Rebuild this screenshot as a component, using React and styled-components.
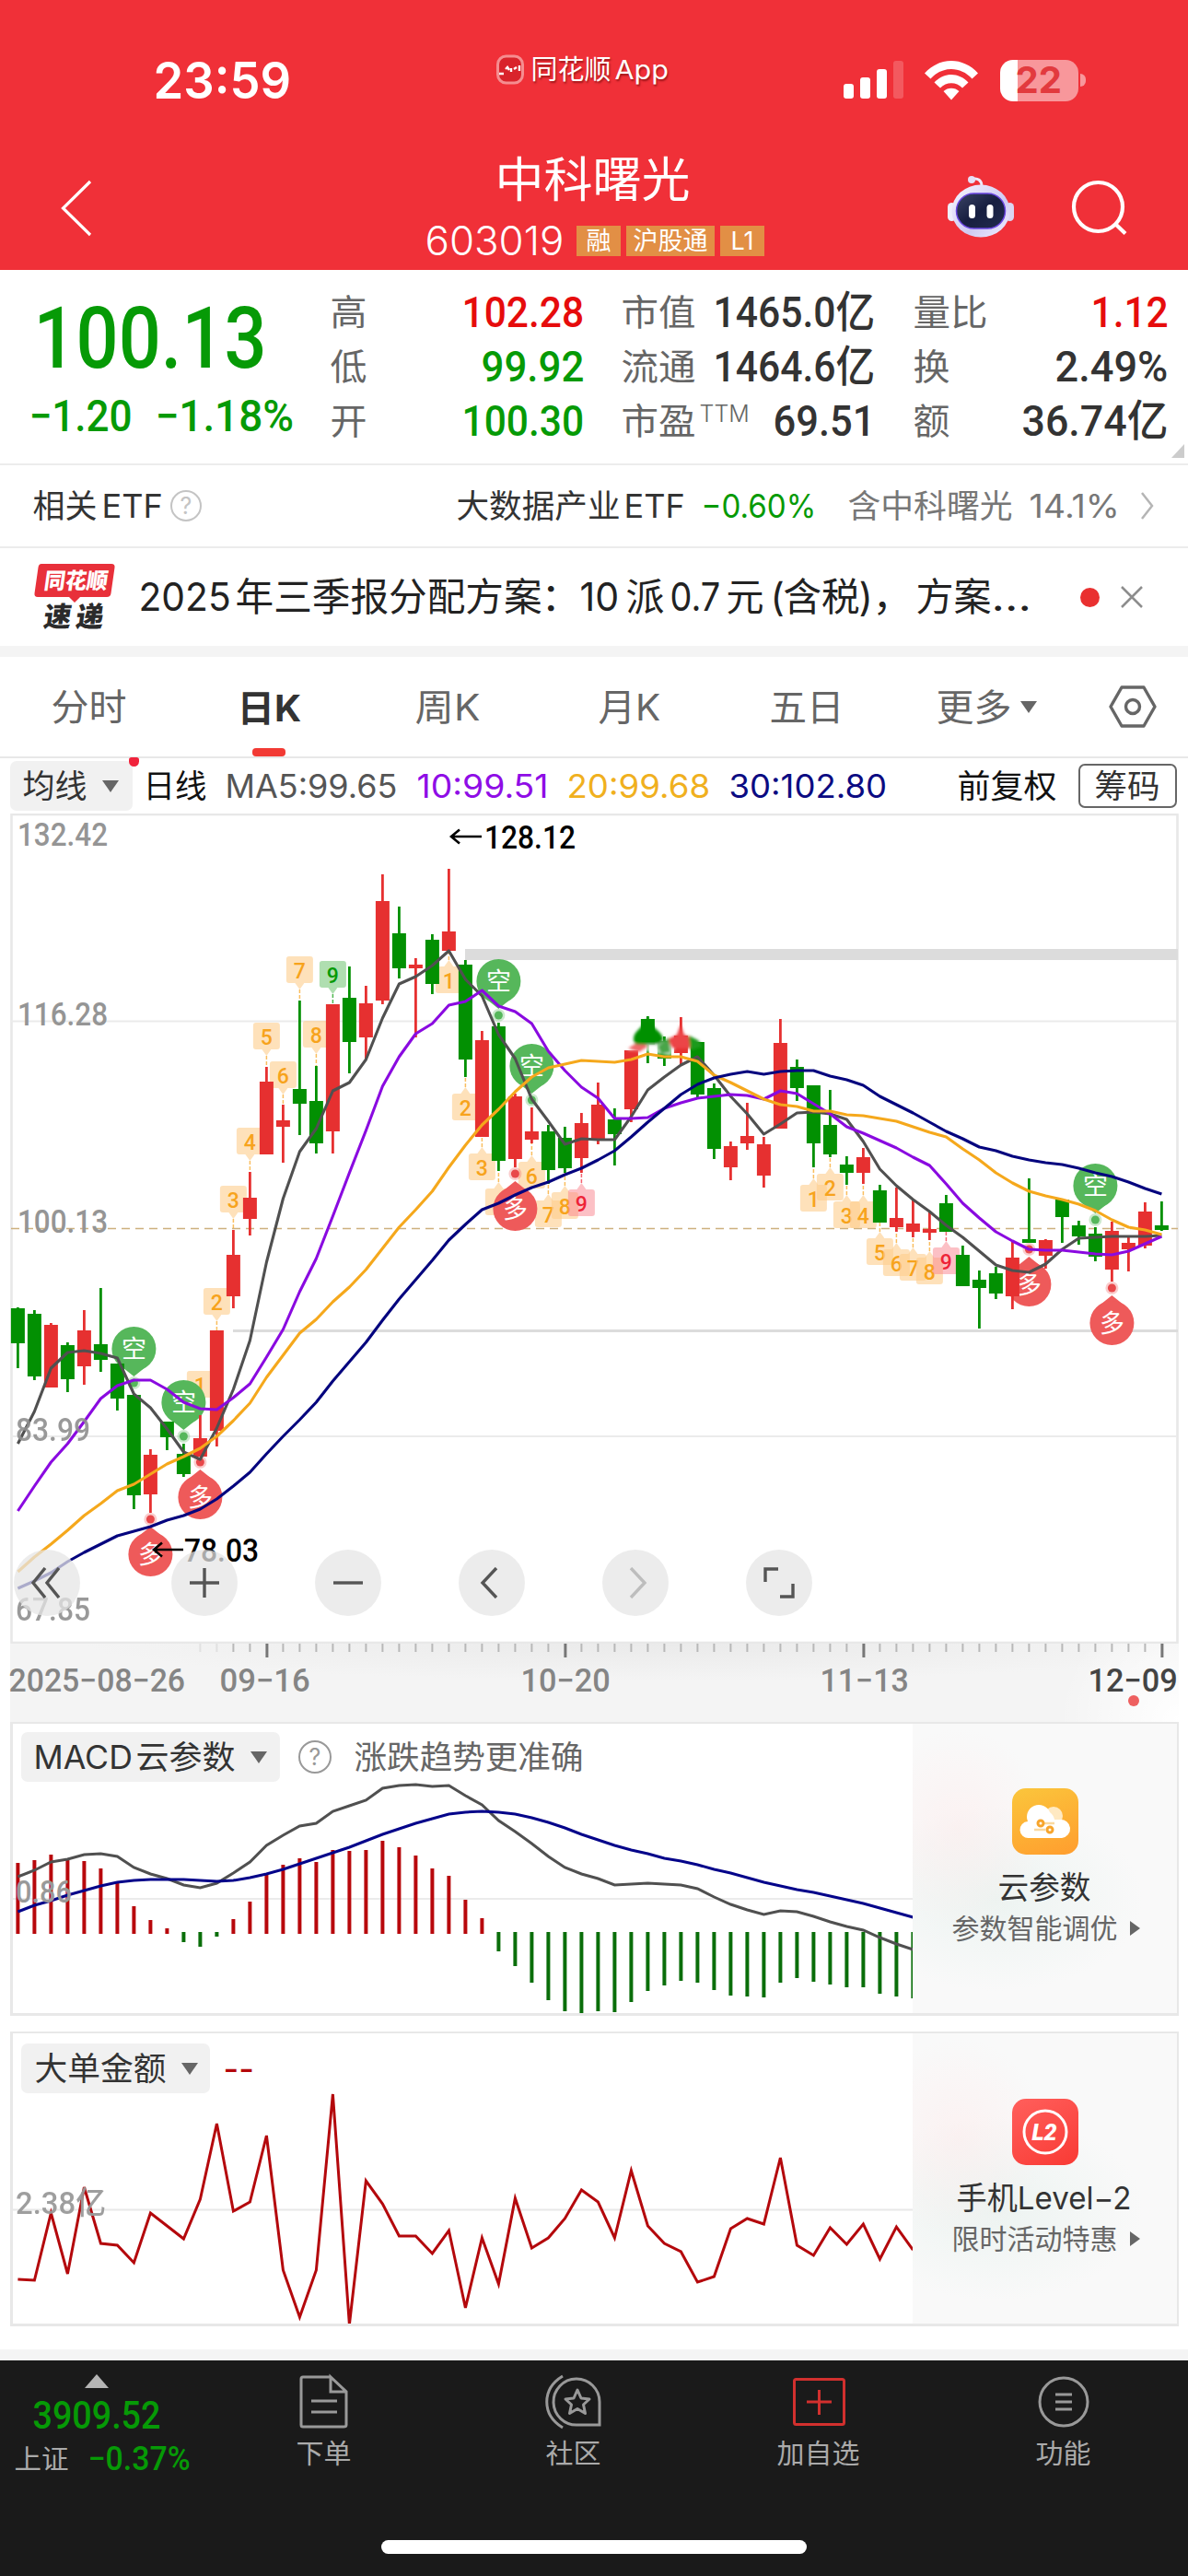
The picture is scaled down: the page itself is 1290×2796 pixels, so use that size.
import React, { useLayoutEffect, useRef } from "react";
import styled, { createGlobalStyle } from "styled-components";

const CJK = '"Noto Sans CJK SC", sans-serif';
const TEXT = `Inter, ${CJK}`;
const DIN = `Roboto, ${CJK}`;
const GREEN = "#069a06";
const RED = "#e60c0c";

const Global = createGlobalStyle`
  * { box-sizing: border-box; }
  html, body { margin: 0; padding: 0; background: #fff; }
  body { font-family: ${TEXT}; color: #333; }
  svg { display: block; flex: none; }
`;

const Screen = styled.main`
  width: 1290px;
  height: 2796px;
  display: flex;
  flex-direction: column;
  background: #fff;
  overflow: hidden;
`;

/* Label squeezed or stretched horizontally to a fixed width */
const FitBox = styled.span`
  display: block;
  flex: none;
  width: ${(p) => p.$w}px;
  margin-left: ${(p) => p.$ml || 0}px;
  height: ${(p) => p.$size}px;
  line-height: ${(p) => p.$size}px;
  font-size: ${(p) => p.$size}px;
  font-family: ${(p) => (p.$din ? DIN : TEXT)};
  font-weight: ${(p) => p.$weight || 400};
  font-style: ${(p) => (p.$italic ? "italic" : "normal")};
  color: ${(p) => p.$color || "inherit"};
  margin-top: ${(p) => p.$dy || 0}px;
  text-shadow: ${(p) => (p.$shadow ? "1px 2px 2px rgba(90,0,0,.55)" : "none")};
`;
const FitInner = styled.span`
  display: inline-block;
  white-space: nowrap;
  transform-origin: 0 50%;
`;
function Fit({ w, size, ml, din, weight, color, dy, italic, shadow, children }) {
  const ref = useRef(null);
  useLayoutEffect(() => {
    const el = ref.current;
    if (el && el.offsetWidth) el.style.transform = `translateX(-1.5px) scaleX(${(w + 1) / el.offsetWidth})`;
  });
  return (
    <FitBox $w={w} $size={size} $ml={ml} $din={din} $weight={weight} $color={color} $dy={dy} $italic={italic} $shadow={shadow}>
      <FitInner ref={ref}>{children}</FitInner>
    </FitBox>
  );
}

/* ---------- header ---------- */
const Header = styled.header`
  height: 293px;
  flex: none;
  background: #f03038;
  color: #fff;
  display: flex;
  flex-direction: column;
`;
const StatusBar = styled.div`
  height: 158px;
  padding-top: 16px;
  display: flex;
  align-items: center;
`;
const AppSource = styled.div`
  display: flex;
  align-items: center;
  margin: -24px 0 0 222px;
`;
const StatusIcons = styled.div`
  display: flex;
  align-items: center;
  margin-left: 189px;
  gap: 22px;
`;
const Battery = styled.div`
  width: 85px;
  height: 45px;
  margin-left: 2px;
  border-radius: 14px;
  display: flex;
  align-items: center;
  padding-left: 18px;
  background: linear-gradient(90deg, #fff 19px, #f8979b 19px);
`;
const Nub = styled.i`
  width: 6px;
  height: 14px;
  margin-left: -20px;
  border-radius: 0 7px 7px 0;
  background: #f8979b;
`;
const TitleBar = styled.div`
  height: 135px;
  display: flex;
`;
const TitleBlock = styled.div`
  width: 367px;
  margin-left: 365px;
  display: flex;
  flex-direction: column;
`;
const CodeRow = styled.div`
  display: flex;
  align-items: center;
  height: 34px;
  margin-top: 22px;
`;
const Tag = styled.span`
  width: ${(p) => p.$w}px;
  height: 33px;
  margin-left: ${(p) => p.$ml}px;
  background: #e28f45;
  display: flex;
  align-items: center;
  justify-content: center;
  font-size: 27px;
  line-height: 33px;
`;

/* ---------- quote ---------- */
const Quote = styled.section`
  height: 212px;
  flex: none;
  border-bottom: 2px solid #ececec;
  display: flex;
  padding-left: 34px;
`;
const PriceBlock = styled.div`
  width: 326px;
  display: flex;
  flex-direction: column;
  padding-top: 28px;
`;
const ChangeRow = styled.div`
  display: flex;
  margin-top: 14px;
  margin-left: -1px;
`;
const QuoteCol = styled.dl`
  width: ${(p) => p.$w}px;
  margin: 16px 0 0 ${(p) => p.$ml || 0}px;
`;
const QuoteRow = styled.div`
  height: 59px;
  display: flex;
  align-items: center;
  justify-content: space-between;
`;
const RowLabel = styled.div`
  display: flex;
  color: #666;
`;
const Corner = styled.i`
  align-self: flex-end;
  width: 0;
  height: 0;
  margin: 0 0 6px 3px;
  border-left: 14px solid transparent;
  border-bottom: 15px solid #ccc;
`;

const EtfRow = styled.section`
  height: 90px;
  flex: none;
  border-bottom: 2px solid #ececec;
  display: flex;
  align-items: center;
  padding: 0 37px;
`;
const Help = styled.span`
  width: ${(p) => p.$d}px;
  height: ${(p) => p.$d}px;
  margin-left: ${(p) => p.$ml}px;
  border: 2px solid ${(p) => p.$c};
  color: ${(p) => p.$c};
  border-radius: 50%;
  font-size: 25px;
  line-height: ${(p) => p.$d - 4}px;
  text-align: center;
`;
const NewsRow = styled.section`
  height: 118px;
  flex: none;
  border-bottom: 12px solid #f4f4f4;
  display: flex;
  align-items: center;
  padding-left: 37px;
`;
const RedDot = styled.i`
  width: ${(p) => p.$d}px;
  height: ${(p) => p.$d}px;
  margin-left: ${(p) => p.$ml || 0}px;
  border-radius: 50%;
  background: #e93030;
`;

/* ---------- tabs ---------- */
const Tabs = styled.nav`
  height: 110px;
  flex: none;
  border-bottom: 2px solid #e8e8e8;
  display: flex;
  align-items: center;
  color: #666;
`;
const ActiveTab = styled.div`
  height: 108px;
  margin-left: 121px;
  display: flex;
  flex-direction: column;
  align-items: center;
  justify-content: flex-end;
`;
const ActiveBar = styled.i`
  width: 36px;
  height: 9px;
  border-radius: 4px;
  background: #f23a34;
  margin: 23px 0 0 -3px;
`;
const Caret = styled.i`
  width: 0;
  height: 0;
  margin-left: ${(p) => p.$ml}px;
  border: 9px solid transparent;
  border-top: 13px solid #666;
  border-bottom: 0;
`;
const RightCaret = styled.i`
  width: 0;
  height: 0;
  margin-left: 13px;
  border: 8px solid transparent;
  border-left: 11px solid #666;
  border-right: 0;
`;

const MaRow = styled.section`
  height: 60px;
  flex: none;
  display: flex;
  align-items: center;
  padding-left: 11px;
`;
const Picker = styled.button`
  position: relative;
  border: 0;
  padding: 0 0 0 15px;
  width: ${(p) => p.$w}px;
  height: 54px;
  border-radius: 7px;
  background: #f1f1f1;
  color: #333;
  display: flex;
  align-items: center;
  flex: none;
`;
const PickerBadge = styled.i`
  position: absolute;
  right: -7px;
  top: -4px;
  width: 11px;
  height: 10px;
  border-radius: 3px 3px 6px 6px;
  background: #f0233c;
`;
const ChipButton = styled.button`
  width: 107px;
  height: 48px;
  margin-left: 23px;
  padding: 0;
  border: 2px solid #666;
  border-radius: 7px;
  background: #fff;
  color: #333;
  display: flex;
  align-items: center;
  justify-content: center;
`;

/* ---------- chart ---------- */
const ChartWrap = styled.section`
  position: relative;
  width: 1269px;
  height: 901px;
  margin-left: 11px;
  flex: none;
`;
const Controls = styled.div`
  position: absolute;
  left: 4px;
  top: 799px;
  display: flex;
  gap: 84px;
`;
const RoundButton = styled.button`
  width: 72px;
  height: 72px;
  padding: 0;
  margin-left: ${(p) => p.$ml || 0}px;
  border: 0;
  border-radius: 50%;
  background: rgba(230, 230, 230, 0.74);
  display: flex;
  align-items: center;
  justify-content: center;
`;
const Axis = styled.section`
  width: 1269px;
  height: 85px;
  margin-left: 11px;
  flex: none;
  background: radial-gradient(circle at 1269px 84px, #fff 0, rgba(255, 255, 255, 0) 130px),
    radial-gradient(ellipse 620px 40px at 700px 0, #eaeaea, rgba(234, 234, 234, 0)), #f4f4f4;
  display: flex;
  flex-direction: column;
`;
const DateRow = styled.div`
  display: flex;
  align-items: center;
  height: 35px;
  margin-top: 7px;
  color: #858585;
`;
const AxisDot = styled.i`
  width: 12px;
  height: 12px;
  border-radius: 50%;
  background: #ee6060;
  margin: -2px 0 0 1214px;
`;

const Panel = styled.section`
  width: 1269px;
  height: ${(p) => p.$h}px;
  margin: ${(p) => p.$mt || 0}px 0 0 11px;
  flex: none;
  border: 3px solid #e8e8e8;
  border-top-width: 2px;
  border-right-width: 2px;
  display: flex;
`;
const PanelMain = styled.div`
  position: relative;
  width: 977px;
`;
const PanelHead = styled.div`
  position: absolute;
  left: 9px;
  top: ${(p) => p.$top}px;
  display: flex;
  align-items: center;
`;
const Promo = styled.aside`
  flex: 1;
  display: flex;
  flex-direction: column;
  align-items: center;
  background: radial-gradient(ellipse 95px 110px at 50px 115px, rgba(255, 230, 230, 0.4), rgba(255, 228, 228, 0)),
    radial-gradient(ellipse 160px 100px at 90px 190px, rgba(228, 240, 236, 0.6), rgba(226, 240, 235, 0)), #f9f9f9;
  padding-top: ${(p) => p.$pt}px;
`;
const PromoIcon = styled.div`
  width: 72px;
  height: 72px;
  border-radius: 15px;
  background: ${(p) => p.$bg};
  margin-bottom: 19px;
`;
const PromoSub = styled.div`
  display: flex;
  align-items: center;
  margin-top: 12px;
  padding-left: 4px;
`;

/* ---------- bottom ---------- */
const NavBar = styled.footer`
  margin-top: auto;
  height: 246px;
  flex: none;
  border-top: 12px solid #f4f4f4;
  background: #1a1a1a;
  color: #aaa;
  display: flex;
  flex-direction: column;
  justify-content: space-between;
  align-items: center;
`;
const NavItems = styled.div`
  width: 1290px;
  display: flex;
`;
const IndexBlock = styled.div`
  width: 206px;
  padding-left: 17px;
  display: flex;
  flex-direction: column;
`;
const UpMark = styled.i`
  width: 0;
  height: 0;
  margin: 15px 0 0 75px;
  border: 13px solid transparent;
  border-bottom: 15px solid #b5b5b5;
  border-top: 0;
`;
const IndexRow = styled.div`
  display: flex;
  align-items: center;
  margin-top: 8px;
`;
const NavItem = styled.div`
  width: 100px;
  margin-left: ${(p) => p.$ml}px;
  padding-top: 13px;
  display: flex;
  flex-direction: column;
  align-items: center;
  gap: 10px;
`;
const HomeBar = styled.i`
  width: 462px;
  height: 15px;
  border-radius: 8px;
  background: #fff;
  margin: 0 0 24px 0;
`;

/* ---------- chart data ---------- */
const STEP = 18;
const X = (i) => 19.4 + STEP * i;

// [colour, high, body top, body bottom, low]
const CANDLES = [
  ["g",1419,1420,1458,1485],["g",1422,1426,1494,1498],["r",1436,1438,1506,1506],["g",1457,1460,1497,1511],
  ["r",1422,1444,1483,1503],["g",1398,1459,1476,1489],["g",1480,1480,1518,1531],["g",1514,1514,1623,1638],
  ["r",1573,1579,1622,1642],["g",1543,1543,1560,1574],["g",1567,1578,1600,1603],["r",1536,1561,1581,1581],
  ["r",1444,1444,1553,1570],["r",1335,1362,1407,1420],["r",1272,1300,1323,1341],["r",1158,1174,1253,1253],
  ["r",1199,1216,1223,1262],["g",1086,1182,1198,1232],["g",1157,1195,1241,1252],["r",1090,1090,1228,1252],
  ["g",1049,1083,1131,1165],["r",1070,1089,1126,1150],["r",949,978,1086,1090],["g",984,1013,1051,1062],
  ["r",1040,1047,1051,1126],["g",1014,1020,1068,1079],["r",943,1011,1032,1032],["g",1042,1047,1150,1169],
  ["r",1119,1129,1234,1234],["g",1110,1114,1260,1271],["r",1187,1190,1258,1267],["r",1202,1228,1237,1241],
  ["g",1221,1228,1270,1285],["g",1223,1235,1268,1273],["r",1208,1219,1257,1273],["r",1175,1199,1238,1242],
  ["g",1203,1215,1231,1265],["r",1140,1140,1204,1218],["g",1103,1106,1134,1154],["g",1125,1130,1149,1157],
  ["r",1104,1124,1143,1156],["g",1131,1131,1188,1192],["g",1176,1181,1247,1258],["r",1239,1244,1267,1281],
  ["r",1197,1233,1241,1248],["r",1234,1242,1276,1289],["r",1106,1132,1225,1225],["g",1150,1158,1181,1195],
  ["g",1178,1178,1241,1267],["g",1183,1221,1253,1256],["g",1255,1264,1273,1286],["r",1246,1256,1273,1285],
  ["g",1286,1292,1327,1327],["r",1289,1322,1332,1337],["r",1301,1328,1337,1343],["r",1315,1334,1338,1346],
  ["g",1297,1306,1337,1337],["g",1352,1362,1396,1396],["g",1379,1389,1398,1442],["g",1375,1382,1404,1410],
  ["r",1348,1365,1407,1421],["g",1279,1345,1349,1349],["r",1345,1346,1363,1377],["g",1301,1302,1321,1349],
  ["g",1325,1330,1342,1351],["g",1332,1339,1364,1369],["r",1326,1336,1378,1391],["r",1343,1349,1356,1380],
  ["r",1305,1315,1352,1355],["g",1304,1330,1335,1336],
];
const MA5 = [1567,1532,1485,1468,1466,1469,1474,1513,1528,1551,1576,1584,1550,1508,1455,1370,1301,1250,1225,1184,1175,1150,1105,1068,1060,1048,1032,1063,1081,1123,1149,1193,1217,1242,1236,1237,1237,1212,1183,1169,1156,1147,1167,1190,1209,1231,1220,1208,1207,1209,1215,1239,1269,1287,1302,1315,1330,1343,1358,1373,1379,1381,1372,1356,1344,1343,1342,1342,1342,1341];
const MA10 = [1640,1613,1587,1567,1543,1518,1504,1498,1498,1508,1522,1529,1530,1517,1502,1473,1443,1402,1366,1320,1273,1227,1179,1147,1122,1111,1091,1087,1075,1092,1098,1111,1141,1162,1180,1192,1214,1214,1213,1203,1197,1192,1190,1188,1189,1193,1184,1187,1198,1209,1223,1230,1238,1246,1256,1265,1285,1306,1322,1337,1347,1356,1357,1357,1359,1361,1362,1358,1350,1342];
const MA20 = [1706,1690,1676,1661,1645,1632,1618,1611,1600,1589,1581,1572,1559,1542,1523,1495,1471,1447,1432,1413,1397,1378,1355,1332,1313,1293,1267,1243,1221,1204,1185,1169,1159,1155,1151,1152,1153,1150,1144,1147,1147,1152,1167,1175,1184,1193,1199,1201,1206,1206,1210,1211,1214,1217,1223,1229,1234,1247,1259,1273,1284,1293,1298,1302,1307,1314,1324,1332,1335,1340];
const MA30 = [1724,1716,1707,1695,1685,1676,1667,1662,1657,1650,1645,1638,1627,1613,1598,1578,1559,1541,1522,1499,1478,1457,1433,1410,1389,1368,1346,1329,1313,1306,1297,1289,1283,1275,1268,1259,1249,1234,1218,1203,1188,1177,1170,1166,1163,1166,1163,1162,1162,1168,1172,1178,1190,1199,1208,1218,1228,1236,1245,1249,1255,1259,1262,1264,1268,1273,1277,1283,1290,1296];

// [candle, number, box top, direction, tone]
const COUNTS = [
  [11,"1",1488,"up"],[12,"2",1398,"up"],[13,"3",1287,"up"],[14,"4",1224,"up"],[15,"5",1110,"up"],[16,"6",1152,"up"],
  [17,"7",1038,"up"],[18,"8",1108,"up"],[19,"9",1043,"up","green"],
  [26,"1",1049,"down"],[27,"2",1187,"down"],[28,"3",1252,"down"],[29,"4",1290,"down"],[31,"6",1261,"down"],
  [32,"7",1303,"down"],[33,"8",1294,"down"],[34,"9",1291,"down","red"],
  [48,"1",1286,"down"],[49,"2",1274,"down"],[50,"3",1304,"down"],[51,"4",1304,"down"],[52,"5",1344,"down"],
  [53,"6",1356,"down"],[54,"7",1361,"down"],[55,"8",1365,"down"],[56,"9",1354,"down","red"],
];
const SHORT_PINS = [[7,1440],[10,1498],[29,1041],[31,1133],[65,1263]];
const LONG_PINS = [[8,1711],[11,1649],[30,1336],[61,1418],[66,1460]];

const BARS = [2022,2019,2013,2019,2020,2028,2044,2069,2084,2093,2108,2113,2102,2083,2064,2035,2024,2017,2021,2008,2009,2008,1998,2005,2014,2028,2036,2062,2082,2118,2134,2152,2171,2183,2185,2183,2184,2173,2161,2155,2150,2152,2160,2166,2167,2168,2152,2147,2151,2154,2157,2157,2164,2167,2169];
const DIF = [2037,2030,2021,2018,2013,2012,2015,2027,2034,2039,2046,2049,2044,2033,2021,2003,1992,1982,1979,1966,1960,1954,1941,1938,1937,1939,1938,1949,1959,1976,1988,2001,2015,2027,2034,2039,2046,2045,2044,2045,2046,2050,2059,2067,2073,2078,2074,2075,2080,2086,2091,2095,2103,2110,2116];
const DEA = [2075,2068,2063,2057,2052,2047,2043,2041,2040,2040,2040,2041,2042,2041,2038,2034,2029,2023,2017,2011,2005,1998,1991,1985,1979,1974,1969,1967,1966,1967,1969,1973,1978,1984,1991,1997,2003,2008,2012,2017,2020,2024,2029,2033,2038,2043,2047,2051,2054,2058,2062,2066,2071,2076,2081];
const FLOW = [2474,2475,2402,2468,2374,2435,2437,2456,2402,2416,2430,2387,2305,2400,2390,2318,2464,2515,2464,2273,2523,2367,2392,2427,2427,2446,2421,2505,2429,2479,2386,2440,2429,2408,2377,2390,2429,2356,2416,2435,2444,2477,2471,2419,2408,2414,2342,2437,2448,2418,2436,2414,2452,2417,2442];

const poly = (ys) => ys.map((y, i) => `${X(i)},${y}`).join(" ");

const SvgText = styled.text`
  font-family: ${(p) => (p.$cjk ? CJK : DIN)};
  font-size: ${(p) => p.$size || 35}px;
  font-weight: ${(p) => p.$weight || 500};
  fill: ${(p) => p.$fill};
`;

const TONES = {
  orange: ["rgba(253,205,140,.6)", "#f7a31c"],
  green: ["rgba(110,195,112,.55)", "#069a06"],
  red: ["rgba(250,130,140,.5)", "#ee2337"],
};

function Count({ i, n, top, dir, tone = "orange" }) {
  const [bg, fg] = TONES[tone];
  const x = X(i);
  const c = CANDLES[i];
  const up = dir === "up";
  const tip = up ? `M${x - 5} ${top + 29}h10l-5 7z` : `M${x - 5} ${top}h10l-5 -7z`;
  return (
    <g>
      <rect x={x - 14.5} y={top} width="29" height="29" rx="3" fill={bg} />
      <path d={tip} fill={bg} />
      <line x1={x} x2={x} y1={up ? top + 36 : top - 7} y2={up ? c[1] : c[4]} stroke={fg} strokeWidth="1.5" strokeDasharray="4 2" opacity=".7" />
      <SvgText x={x} y={top + 23.5} textAnchor="middle" $size={23} $weight={500} $fill={fg}>{n}</SvgText>
    </g>
  );
}

function ShortPin({ i, top }) {
  const x = X(i);
  return (
    <g>
      <circle cx={x} cy={top + 61} r="7" fill="#56b75b" opacity=".3" />
      <circle cx={x} cy={top + 61} r="4.5" fill="#56b75b" />
      <path d={`M${x - 15} ${top + 42}L${x} ${top + 54}L${x + 15} ${top + 42}z`} fill="#56b75b" />
      <circle cx={x} cy={top + 24} r="24" fill="#56b75b" />
      <SvgText x={x} y={top + 34} textAnchor="middle" $cjk $size={27} $weight={400} $fill="#fff">空</SvgText>
    </g>
  );
}
function LongPin({ i, bottom }) {
  const x = X(i);
  return (
    <g>
      <circle cx={x} cy={bottom - 62} r="7" fill="#ee5a5a" opacity=".3" />
      <circle cx={x} cy={bottom - 62} r="4.5" fill="#e8484a" />
      <path d={`M${x - 15} ${bottom - 42}L${x} ${bottom - 54}L${x + 15} ${bottom - 42}z`} fill="#ee5a5a" />
      <circle cx={x} cy={bottom - 24} r="24" fill="#ee5a5a" />
      <SvgText x={x} y={bottom - 14} textAnchor="middle" $cjk $size={27} $weight={400} $fill="#fff">多</SvgText>
    </g>
  );
}

function KLine() {
  return (
    <svg width="1269" height="901" viewBox="11 883 1269 901">
      <rect x="12.5" y="884" width="1266" height="899" fill="#fff" stroke="#e8e8e8" strokeWidth="2.6" />
      <path d="M12 1108.500H1278M12 1559H1278" stroke="#ebebeb" strokeWidth="2" />
      <rect x="505" y="1030" width="774" height="12" fill="#dcdcdc" />
      <rect x="253" y="1443" width="1026" height="3" fill="#dcdcdc" />
      <path d="M12 1333.500H1279" stroke="#cdb07e" strokeWidth="1.6" strokeDasharray="9 6" />
      {[["132.42",19,98,918],["116.28",19,98,1113],["100.13",19,98,1338]].map(([t,x,w,y]) => (
        <SvgText key={t} x={x} y={y} textLength={w} lengthAdjust="spacingAndGlyphs" $weight={500} $fill="#959595">{t}</SvgText>
      ))}
      {COUNTS.map((c) => <Count key={c[0]} i={c[0]} n={c[1]} top={c[2]} dir={c[3]} tone={c[4]} />)}
      {LONG_PINS.map(([i, b]) => <LongPin key={i} i={i} bottom={b} />)}
      {SHORT_PINS.map(([i, t]) => <ShortPin key={i} i={i} top={t} />)}
      {CANDLES.map(([k, hi, t, b, lo], i) => (
        <g key={i} fill={k === "g" ? "#029002" : "#e63030"}>
          <rect x={X(i) - 1.4} y={hi} width="2.8" height={lo - hi} />
          <rect x={X(i) - 7.5} y={t} width="15" height={b - t} />
        </g>
      ))}
      <g filter="url(#soft)">
        <path d="M681 1140L694 1128L736 1132L728 1146L700 1141z" fill="#fff" opacity=".7" />
        <path d="M682 1138L694 1130L704 1136L694 1142z" fill="#f06a6a" />
        <path d="M703 1104C706 1115 720 1120 720 1128C718 1136 710 1133 703 1134C696 1133 688 1136 688 1128C688 1118 700 1115 703 1104z" fill="#029002" />
        <path d="M739 1112L743 1123L751 1126L749 1138L730 1138L725 1128L735 1123z" fill="#ec4446" />
        <path d="M748 1124L758 1129L763 1136L750 1140z" fill="#1c9a1c" />
        <path d="M714 1136L726 1126L728 1142L718 1144z" fill="#4aa54a" />
      </g>
      <defs>
        <filter id="soft" x="-20%" y="-20%" width="140%" height="140%"><feGaussianBlur stdDeviation="1.8" /></filter>
      </defs>
      <g fill="none" strokeWidth="3.1" strokeLinejoin="round">
        <polyline points={poly(MA5)} stroke="#505050" />
        <polyline points={poly(MA10)} stroke="#8a0ae0" />
        <polyline points={poly(MA20)} stroke="#f5a81c" />
        <polyline points={poly(MA30)} stroke="#04047e" />
      </g>
      {[["83.99",17,81,1564],["67.85",17,81,1759]].map(([t,x,w,y]) => (
        <SvgText key={t} x={x} y={y} textLength={w} lengthAdjust="spacingAndGlyphs" $weight={500} $fill="#8f8f8f" opacity=".9">{t}</SvgText>
      ))}
      <g stroke="#000" strokeWidth="2.6" fill="none">
        <path d="M523 908H490M499 900.500L490 908L499 915.500" />
        <path d="M199 1682H167M176 1674.500L167 1682L176 1689.500" />
      </g>
      <SvgText x="526" y="920.500" textLength="99" lengthAdjust="spacingAndGlyphs" $fill="#000">128.12</SvgText>
      <SvgText x="200" y="1694.500" textLength="81" lengthAdjust="spacingAndGlyphs" $fill="#000">78.03</SvgText>
    </svg>
  );
}

const Glyph = ({ d, c = "#555", s = 34 }) => (
  <svg width={s} height="34" viewBox={`0 0 ${s} 34`} fill="none" stroke={c} strokeWidth="3.4"><path d={d} /></svg>
);

function AxisTicks() {
  const ticks = [];
  for (let i = 11; i < 70; i++) {
    const major = (i - 15) % 18 === 0;
    const op = i < 13 ? 0.3 : 1;
    ticks.push(<rect key={i} x={X(i) - 1} y="0" width={major ? 3 : 2} height={major ? 15 : 9} fill={major ? "#777" : "#b8b8b8"} opacity={op} />);
  }
  return <svg width="1269" height="16" viewBox="11 0 1269 16">{ticks}</svg>;
}

export default function App() {
  return (
    <Screen>
      <Global />
      <Header>
        <StatusBar>
          <Fit w={149} size={55} ml={168} weight={600}>23:59</Fit>
          <AppSource>
            <svg width="30" height="33" viewBox="0 0 30 33">
              <rect x="1.500" y="2" width="27" height="29" rx="9" fill="#d9232b" stroke="#f58d90" strokeWidth="3" />
              <path d="M3 21h5M10 16l2-2 2 3M16 19v-4M19 16l3-2M25 12v6" stroke="#fff" strokeWidth="2.4" fill="none" />
            </svg>
            <Fit w={86} size={29} ml={9} shadow>同花顺</Fit>
            <Fit w={58} size={29} ml={5} shadow>App</Fit>
          </AppSource>
          <StatusIcons>
            <svg width="66" height="42" viewBox="0 0 66 42" fill="#fff">
              <rect x="0" y="25" width="11" height="16" rx="3" />
              <rect x="18" y="18" width="11" height="23" rx="3" />
              <rect x="36" y="9" width="11" height="32" rx="3" />
              <rect x="54" y="0" width="11" height="41" rx="3" opacity=".2" />
            </svg>
            <svg width="58" height="43" viewBox="0 0 58 43" fill="#fff">
              <path d="M0 13.500C16-4.500 42-4.500 58 13.500L51.500 19.500C39 5.500 19 5.500 6.500 19.500z" />
              <path d="M10.500 23.500C21 12 37 12 47.500 23.500L41 29.500C34.500 22.500 23.500 22.500 17 29.500z" />
              <path d="M20.500 33C25 28.500 33 28.500 37.500 33L29 42.500z" />
            </svg>
            <Battery><Fit w={49} size={40} weight={650} color="#e23a3e">22</Fit></Battery>
            <Nub />
          </StatusIcons>
        </StatusBar>
        <TitleBar>
          <svg width="36" height="62" viewBox="0 0 36 62" style={{ margin: "37px 0 0 64px" }} fill="none" stroke="#fff" strokeWidth="3.200"><path d="M34 2L4.500 31L34 60" /></svg>
          <TitleBlock>
            <Fit w={211} size={52} ml={74} dy={12}>中科曙光</Fit>
            <CodeRow>
              <Fit w={150} size={43} ml={-2} weight={350}>603019</Fit>
              <Tag $w={48} $ml={13}>融</Tag>
              <Tag $w={96} $ml={6}>沪股通</Tag>
              <Tag $w={48} $ml={6}>L1</Tag>
            </CodeRow>
          </TitleBlock>
          <svg width="80" height="70" viewBox="1025 190 80 70" style={{ margin: "32px 0 0 193px" }}>
            <defs>
              <linearGradient id="shell" x1="0" y1="0" x2="1" y2="1"><stop offset="0" stopColor="#f8f6ff" /><stop offset=".6" stopColor="#cfcaf2" /><stop offset="1" stopColor="#f3f1ff" /></linearGradient>
              <linearGradient id="visor" x1="0" y1="0" x2="1" y2="1"><stop offset="0" stopColor="#3a4364" /><stop offset=".5" stopColor="#171e40" /><stop offset="1" stopColor="#222b4e" /></linearGradient>
            </defs>
            <path d="M1055 194.500C1062 192.500 1066 196 1066 202" stroke="#efe9fa" strokeWidth="3" fill="none" />
            <circle cx="1055" cy="195" r="4" fill="#e6def5" />
            <rect x="1029" y="220" width="9" height="20" rx="4.500" fill="#efeefb" />
            <rect x="1092" y="220" width="9" height="20" rx="4.500" fill="#dad6f2" />
            <ellipse cx="1065" cy="229" rx="31.500" ry="28.500" fill="url(#shell)" />
            <rect x="1038.500" y="210" width="53" height="38" rx="19" fill="url(#visor)" stroke="#6a45e0" strokeWidth="1.500" />
            <rect x="1052" y="222" width="7" height="15" rx="3.500" fill="#fff" />
            <rect x="1071.500" y="222" width="7" height="15" rx="3.500" fill="#fff" />
          </svg>
          <svg width="64" height="64" viewBox="1162 194 64 64" style={{ margin: "36px 0 0 57px" }} fill="none" stroke="#fff" strokeWidth="4.200">
            <circle cx="1192.500" cy="224.500" r="26.500" /><path d="M1211 243L1222 253.500" />
          </svg>
        </TitleBar>
      </Header>

      <Quote>
        <PriceBlock>
          <Fit w={252} size={93} ml={4} din weight={500} color={GREEN}>100.13</Fit>
          <ChangeRow>
            <Fit w={111} size={48} din weight={500} color={GREEN}>−1.20</Fit>
            <Fit w={150} size={48} ml={26} din weight={500} color={GREEN}>−1.18%</Fit>
          </ChangeRow>
        </PriceBlock>
        <QuoteCol $w={275}>
          {[["高","102.28",132,RED],["低","99.92",111,GREEN],["开","100.30",132,GREEN]].map(([l,v,w,c]) => (
            <QuoteRow key={l}>
              <RowLabel><Fit w={39} size={39}>{l}</Fit></RowLabel>
              <Fit w={w} size={47} din weight={500} color={c}>{v}</Fit>
            </QuoteRow>
          ))}
        </QuoteCol>
        <QuoteCol $w={275} $ml={41}>
          <QuoteRow><RowLabel><Fit w={80} size={39}>市值</Fit></RowLabel><Fit w={175} size={47} din weight={500}>1465.0亿</Fit></QuoteRow>
          <QuoteRow><RowLabel><Fit w={80} size={39}>流通</Fit></RowLabel><Fit w={175} size={47} din weight={500}>1464.6亿</Fit></QuoteRow>
          <QuoteRow><RowLabel><Fit w={80} size={39}>市盈</Fit><Fit w={53} size={25} ml={5} weight={300}>TTM</Fit></RowLabel><Fit w={110} size={47} din weight={500}>69.51</Fit></QuoteRow>
        </QuoteCol>
        <QuoteCol $w={276} $ml={42}>
          <QuoteRow><RowLabel><Fit w={80} size={39}>量比</Fit></RowLabel><Fit w={83} size={47} din weight={500} color={RED}>1.12</Fit></QuoteRow>
          <QuoteRow><RowLabel><Fit w={39} size={39}>换</Fit></RowLabel><Fit w={122} size={47} din weight={500}>2.49%</Fit></QuoteRow>
          <QuoteRow><RowLabel><Fit w={39} size={39}>额</Fit></RowLabel><Fit w={158} size={47} din weight={500}>36.74亿</Fit></QuoteRow>
        </QuoteCol>
        <Corner />
      </Quote>

      <EtfRow>
        <Fit w={69} size={35}>相关</Fit>
        <Fit w={65} size={35} ml={6}>ETF</Fit>
        <Help $d={34} $ml={8} $c="#c4c4c4">?</Help>
        <Fit w={177} size={35} ml={278}>大数据产业</Fit>
        <Fit w={65} size={35} ml={5}>ETF</Fit>
        <Fit w={124} size={35} ml={19} color={GREEN}>−0.60%</Fit>
        <Fit w={178} size={35} ml={35} color="#777">含中科曙光</Fit>
        <Fit w={97} size={35} ml={19} color="#777">14.1%</Fit>
        <svg width="14" height="30" viewBox="0 0 14 30" style={{ marginLeft: 23 }} fill="none" stroke="#b5b5b5" strokeWidth="2.500"><path d="M1 1L12 15L1 29" /></svg>
      </EtfRow>

      <NewsRow>
        <svg width="90" height="96" viewBox="0 -11 90 96">
          <path d="M8 1H84Q88 1 87.500 5L83.500 33Q83 37 79 37H50L44 43L38 37H4Q0 37 .5 33L4.500 5Q5 1 8 1z" fill="#e8303a" />
          <g transform="skewX(-8)">
            <SvgText x="14" y="28" textLength="69" lengthAdjust="spacingAndGlyphs" $cjk $size={24} $weight={900} $fill="#fff">同花顺</SvgText>
            <SvgText x="19" y="69" textLength="65" $cjk $size={30} $weight={900} $fill="#2b2b2b">速递</SvgText>
          </g>
        </svg>
        <Fit w={99} size={42} ml={25} color="#222">2025</Fit>
        <Fit w={332} size={42} ml={6} color="#222">年三季报分配方案</Fit>
        <Fit w={42} size={42} ml={0} color="#222">：</Fit>
        <Fit w={42} size={42} ml={0} color="#222">10</Fit>
        <Fit w={41} size={42} ml={8} color="#222">派</Fit>
        <Fit w={54} size={42} ml={7} color="#222">0.7</Fit>
        <Fit w={40} size={42} ml={7} color="#222">元</Fit>
        <Fit w={14} size={42} ml={8} color="#222">(</Fit>
        <Fit w={82} size={42} ml={0} color="#222">含税</Fit>
        <Fit w={14} size={42} ml={0} color="#222">)</Fit>
        <Fit w={42} size={42} ml={1} color="#222">，</Fit>
        <Fit w={81} size={42} ml={5} color="#222">方案</Fit>
        <Fit w={42} size={42} ml={1} color="#222">...</Fit>
        <RedDot $d={21} $ml={53} />
        <svg width="24" height="24" viewBox="0 0 24 24" style={{ marginLeft: 23 }} stroke="#8d8d8d" strokeWidth="2.500"><path d="M1 1L23 23M23 1L1 23" /></svg>
      </NewsRow>

      <Tabs>
        <Fit w={81} size={40} ml={57} dy={2}>分时</Fit>
        <ActiveTab>
          <Fit w={69} size={40} weight={700} color="#333">日K</Fit>
          <ActiveBar />
        </ActiveTab>
        <Fit w={70} size={40} ml={124} dy={2}>周K</Fit>
        <Fit w={67} size={40} ml={129} dy={2}>月K</Fit>
        <Fit w={80} size={40} ml={119} dy={2}>五日</Fit>
        <Fit w={81} size={40} ml={101} dy={2}>更多</Fit>
        <Caret $ml={9} />
        <svg width="52" height="46" viewBox="0 0 52 46" style={{ marginLeft: 78 }} fill="none" stroke="#666" strokeWidth="3.400">
          <path d="M14 2H38L50 23L38 44H14L2 23z" strokeLinejoin="round" /><circle cx="26" cy="23" r="7.500" />
        </svg>
      </Tabs>

      <MaRow>
        <Picker $w={133}><Fit w={69} size={35}>均线</Fit><Caret $ml={16} /><PickerBadge /></Picker>
        <Fit w={68} size={35} ml={13} color="#111">日线</Fit>
        <Fit w={186} size={35} ml={21} weight={400} color="#555">MA5:99.65</Fit>
        <Fit w={142} size={35} ml={22} color="#8f0de6">10:99.51</Fit>
        <Fit w={155} size={35} ml={21} color="#f0b01e">20:99.68</Fit>
        <Fit w={170} size={35} ml={21} color="#0b0b82">30:102.80</Fit>
        <Fit w={107} size={35} ml={78} color="#111">前复权</Fit>
        <ChipButton><Fit w={70} size={35}>筹码</Fit></ChipButton>
      </MaRow>

      <ChartWrap>
        <KLine />
        <Controls>
          <RoundButton><Glyph s={36} d="M16 1L3 17L16 33M31 1L18 17L31 33" /></RoundButton>
          <RoundButton $ml={15}><Glyph d="M17 1V33M1 17H33" /></RoundButton>
          <RoundButton><Glyph d="M1 17H33" /></RoundButton>
          <RoundButton><Glyph d="M22 1L7 17L22 33" /></RoundButton>
          <RoundButton><Glyph c="#bdbdbd" d="M12 1L27 17L12 33" /></RoundButton>
          <RoundButton><Glyph d="M2 16V2H16M32 18V32H18" /></RoundButton>
        </Controls>
      </ChartWrap>
      <Axis>
        <AxisTicks />
        <DateRow>
          <Fit w={191} size={35} din weight={500}>2025−08−26</Fit>
          <Fit w={97} size={35} ml={38} din weight={500}>09−16</Fit>
          <Fit w={96} size={35} ml={230} din weight={500}>10−20</Fit>
          <Fit w={95} size={35} ml={229} din weight={500}>11−13</Fit>
          <Fit w={96} size={35} ml={196} din weight={500} color="#444">12−09</Fit>
        </DateRow>
        <AxisDot />
      </Axis>

      <Panel $h={319}>
        <PanelMain>
          <svg width="977" height="314" viewBox="14 1871 977 314">
            <path d="M14 2061H991" stroke="#ebebeb" strokeWidth="2" />
            {BARS.map((y, i) => (
              <rect key={i} x={X(i) - 2} width="4" y={y < 2097 ? y : 2097} height={y < 2097 ? 2099 - y : y - 2097} fill={y < 2097 ? "#b8080c" : "#0a6e0a"} />
            ))}
            <polyline points={poly(DIF)} fill="none" stroke="#505050" strokeWidth="3" />
            <polyline points={poly(DEA)} fill="none" stroke="#04048a" strokeWidth="3" />
            <SvgText x="17" y="2065" textLength="61" lengthAdjust="spacingAndGlyphs" $weight={500} $size={34} $fill="#999">0.86</SvgText>
          </svg>
          <PanelHead $top={9}>
            <Picker $w={281}>
              <Fit w={106} size={35}>MACD</Fit><Fit w={107} size={35} ml={4}>云参数</Fit><Caret $ml={17} />
            </Picker>
            <Help $d={36} $ml={20} $c="#999">?</Help>
            <Fit w={248} size={35} ml={26} color="#666">涨跌趋势更准确</Fit>
          </PanelHead>
        </PanelMain>
        <Promo $pt={70}>
          <PromoIcon $bg="linear-gradient(160deg,#fbc63c,#ff9d2e)">
            <svg width="72" height="72" viewBox="0 0 72 72">
              <circle cx="45" cy="30" r="10" fill="#ffe9c2" />
              <path d="M18 54a9 9 0 0 1-1-18a13 13 0 0 1 24-10q4 3 5 8h6a10 10 0 0 1 2 20z" fill="#fff" />
              <path d="M35 38H46M24 45H36" stroke="#f9d9a0" strokeWidth="2.500" />
              <circle cx="31" cy="38" r="3" fill="none" stroke="#f7a52c" strokeWidth="3" />
              <circle cx="41" cy="45" r="3" fill="none" stroke="#f7a52c" strokeWidth="3" />
            </svg>
          </PromoIcon>
          <Fit w={100} size={34}>云参数</Fit>
          <PromoSub><Fit w={179} size={30} color="#666">参数智能调优</Fit><RightCaret /></PromoSub>
        </Promo>
      </Panel>

      <Panel $h={320} $mt={17}>
        <PanelMain>
          <svg width="977" height="315" viewBox="14 2207 977 315">
            <path d="M14 2398.500H991" stroke="#e8e8e8" strokeWidth="2" />
            <polyline points={poly(FLOW)} fill="none" stroke="#b4080c" strokeWidth="3" />
            <SvgText x="17" y="2403" textLength="98" lengthAdjust="spacingAndGlyphs" $weight={500} $size={34} $fill="#999" opacity=".95">2.38亿</SvgText>
          </svg>
          <PanelHead $top={11}>
            <Picker $w={205}><Fit w={142} size={35}>大单金额</Fit><Caret $ml={17} /></Picker>
            <Fit w={32} size={35} ml={16} color="#b4080c" weight={500}>--</Fit>
          </PanelHead>
        </PanelMain>
        <Promo $pt={71}>
          <PromoIcon $bg="linear-gradient(150deg,#ff5f5c,#f93a34)">
            <svg width="72" height="72" viewBox="0 0 72 72">
              <circle cx="36" cy="36" r="23" fill="none" stroke="#fff" strokeWidth="3" />
              <SvgText x="35" y="45" textAnchor="middle" $size={25} $weight={900} $fill="#fff" fontStyle="italic">L2</SvgText>
            </svg>
          </PromoIcon>
          <Fit w={189} size={34}>手机Level−2</Fit>
          <PromoSub><Fit w={179} size={30} color="#666">限时活动特惠</Fit><RightCaret /></PromoSub>
        </Promo>
      </Panel>

      <NavBar>
        <NavItems>
          <IndexBlock>
            <UpMark />
            <Fit w={138} size={42} ml={20} dy={9} din weight={500} color={GREEN}>3909.52</Fit>
            <IndexRow>
              <Fit w={58} size={29}>上证</Fit>
              <Fit w={110} size={36} ml={22} din weight={500} color={GREEN}>−0.37%</Fit>
            </IndexRow>
          </IndexBlock>
          <NavItem $ml={96}>
            <svg width="56" height="64" viewBox="0 0 56 64" fill="none" stroke="#999" strokeWidth="3">
              <path d="M35 5H5Q3 5 3 7V57Q3 59 5 59H49Q52 59 52 57V21L35 5V21H52M14 31H42M14 43H42" />
            </svg>
            <Fit w={59} size={29}>下单</Fit>
          </NavItem>
          <NavItem $ml={171}>
            <svg width="64" height="64" viewBox="0 0 64 64" fill="none" stroke="#999" strokeWidth="3">
              <path d="M20 4C-3 18-3 46 20 60" />
              <path d="M60 57H36A25 25 0 1 1 60 32z" />
              <path d="M36 19L40 28L49 29L42.500 35L44.500 44.500L36 39.500L27.500 44.500L29.500 35L23 29L32 28z" strokeLinejoin="round" />
            </svg>
            <Fit w={59} size={29}>社区</Fit>
          </NavItem>
          <NavItem $ml={166}>
            <svg width="60" height="64" viewBox="0 0 60 64" fill="none" stroke="#d2302e" strokeWidth="3">
              <rect x="3.500" y="7.500" width="54" height="49" rx="2" /><path d="M30.500 19V46M17 32H44" />
            </svg>
            <Fit w={89} size={29}>加自选</Fit>
          </NavItem>
          <NavItem $ml={166}>
            <svg width="58" height="64" viewBox="0 0 58 64" fill="none" stroke="#999" strokeWidth="3">
              <circle cx="29" cy="32" r="26" /><path d="M20 24H38M20 32H38M20 40H38" />
            </svg>
            <Fit w={59} size={29}>功能</Fit>
          </NavItem>
        </NavItems>
        <HomeBar />
      </NavBar>
    </Screen>
  );
}
